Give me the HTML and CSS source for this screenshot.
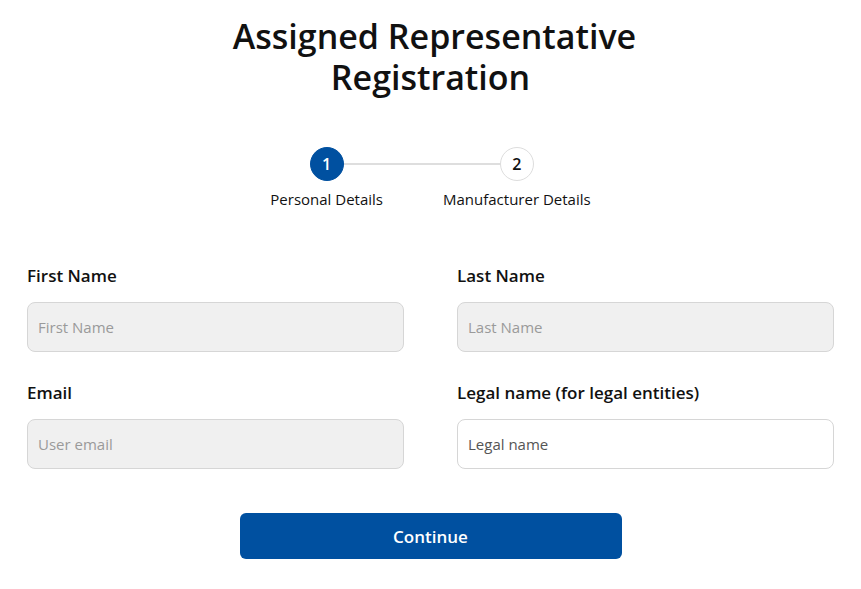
FILE: index.html
```html
<!DOCTYPE html>
<html lang="en">
<head>
    <meta charset="UTF-8">
    <meta name="viewport" content="width=device-width, initial-scale=1.0">
    <title>Assigned Representative Registration</title>
    <link rel="stylesheet" href="styles.css">
</head>
<body>
    <div class="page">
        <h1 class="page-title"><span class="title-first">Assigned Representative</span><br>Registration</h1>

        <!-- Stepper -->
        <div class="stepper">
            <div class="stepper-line"></div>
            <div class="step">
                <div class="step-circle active">1</div>
                <div class="step-label">Personal Details</div>
            </div>
            <div class="step-gap"></div>
            <div class="step">
                <div class="step-circle">2</div>
                <div class="step-label">Manufacturer Details</div>
            </div>
        </div>

        <form class="reg-form">
            <div class="form-grid">
                <div class="field">
                    <label class="field-label">First Name</label>
                    <input class="field-input disabled" type="text" placeholder="First Name" disabled>
                </div>
                <div class="field">
                    <label class="field-label">Last Name</label>
                    <input class="field-input disabled" type="text" placeholder="Last Name" disabled>
                </div>
                <div class="field">
                    <label class="field-label">Email</label>
                    <input class="field-input disabled" type="text" placeholder="User email" disabled>
                </div>
                <div class="field">
                    <label class="field-label">Legal name (for legal entities)</label>
                    <input class="field-input" type="text" placeholder="Legal name">
                </div>
            </div>

            <div class="actions">
                <button type="button" class="continue-button">Continue</button>
            </div>
        </form>
    </div>
</body>
</html>
```

FILE: styles.css
```css
* {
    margin: 0;
    padding: 0;
    box-sizing: border-box;
}

body {
    background: #ffffff;
    font-family: 'Open Sans', 'Noto Sans', sans-serif;
    color: #111111;
}

.page {
    padding: 16px 27px 0 27px;
}

.page-title {
    font-size: 34px;
    font-weight: 600;
    line-height: 41px;
    text-align: center;
    color: #111111;
}

.title-first {
    padding-left: 8px;
}

/* Stepper */
.stepper {
    position: relative;
    display: flex;
    justify-content: center;
    margin-top: 49px;
    width: max-content;
    margin-left: auto;
    margin-right: auto;
}

.stepper-line {
    position: absolute;
    top: 16px;
    left: 56px;
    right: 73px;
    height: 2px;
    background: #dedede;
}

.step {
    display: flex;
    flex-direction: column;
    align-items: center;
    position: relative;
    z-index: 1;
}

.step-gap {
    width: 60px;
}

.step-circle {
    width: 34px;
    height: 34px;
    border-radius: 50%;
    border: 1px solid #dddddd;
    background: #ffffff;
    color: #111111;
    font-size: 16px;
    font-weight: 600;
    display: flex;
    align-items: center;
    justify-content: center;
}

.step-circle.active {
    background: #0050a0;
    border-color: #0050a0;
    color: #ffffff;
}

.step-label {
    margin-top: 8px;
    font-size: 15px;
    line-height: 20px;
    color: #111111;
    white-space: nowrap;
}

/* Form */
.reg-form {
    margin-top: 55px;
}

.form-grid {
    display: grid;
    grid-template-columns: 1fr 1fr;
    column-gap: 53px;
    row-gap: 29px;
}

.field {
    display: flex;
    flex-direction: column;
}

.field-label {
    font-size: 17px;
    font-weight: 600;
    line-height: 23px;
    margin-bottom: 15px;
    color: #111111;
}

.field-input {
    height: 50px;
    border: 1px solid #d6d6d6;
    border-radius: 8px;
    padding: 0 10px;
    font-family: inherit;
    font-size: 15px;
    background: #ffffff;
    color: #333333;
    outline: none;
}

.field-input::placeholder {
    color: #555555;
}

.field-input.disabled {
    background: #f0f0f0;
}

.field-input.disabled::placeholder {
    color: #9a9a9a;
}

.actions {
    display: flex;
    justify-content: center;
    margin-top: 44px;
}

.continue-button {
    width: 382px;
    height: 46px;
    border: none;
    border-radius: 6px;
    background: #0050a0;
    color: #ffffff;
    font-family: inherit;
    font-size: 17px;
    font-weight: 600;
    cursor: pointer;
}
```
